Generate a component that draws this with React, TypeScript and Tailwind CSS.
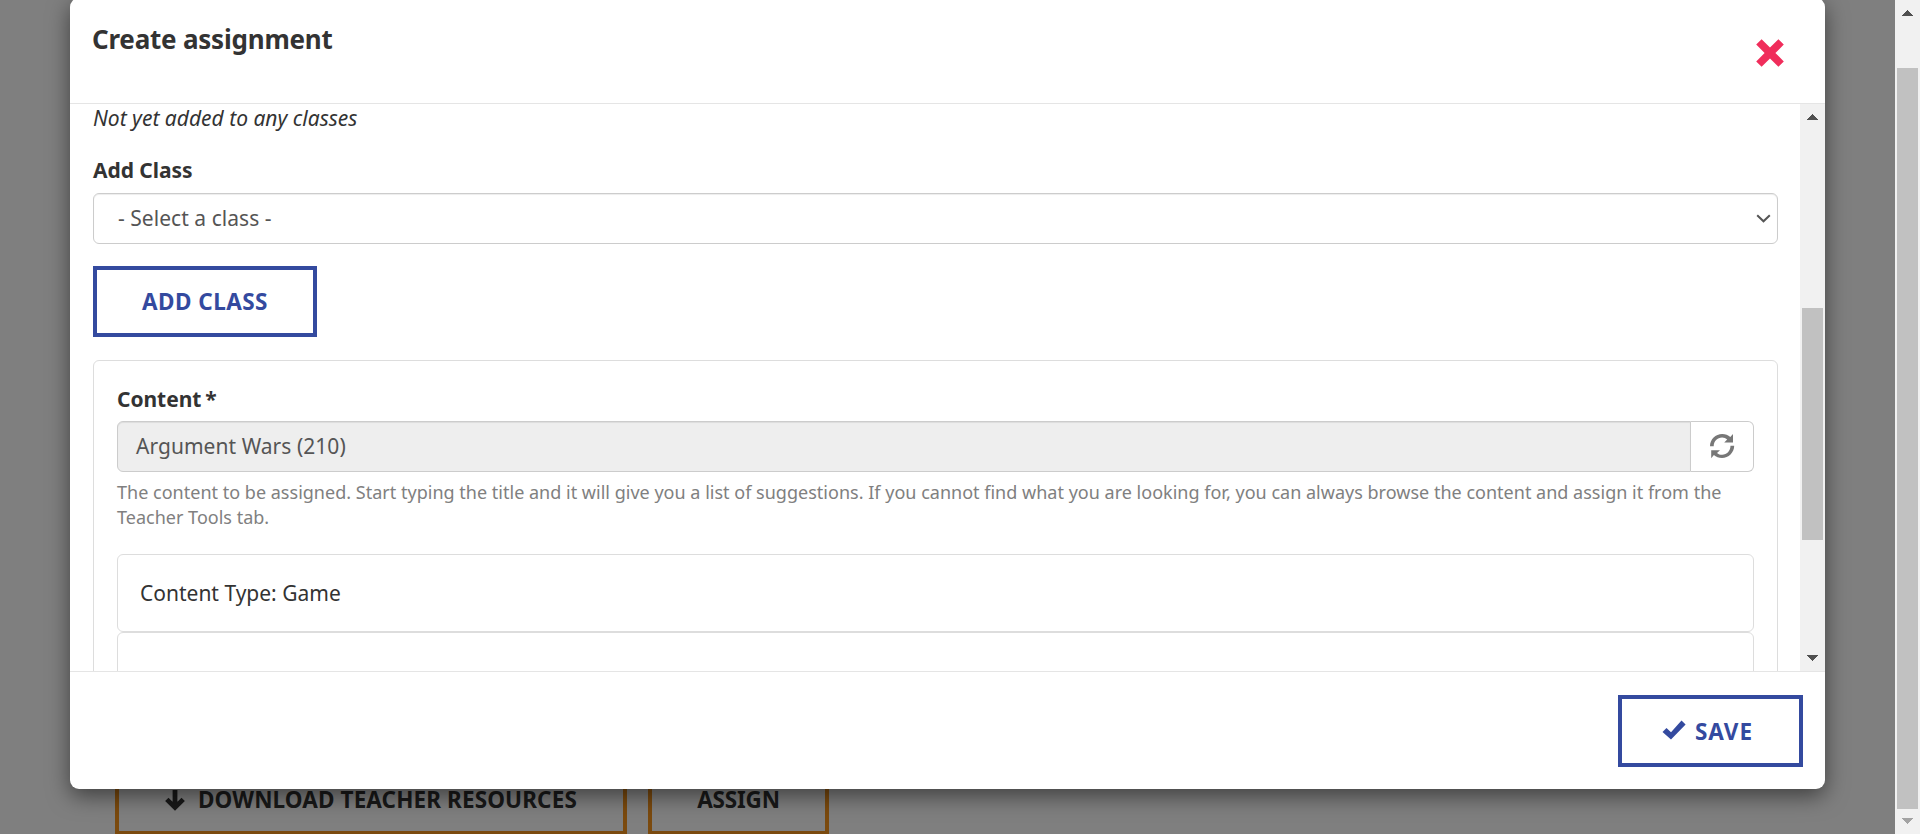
import type { ReactNode } from "react";

function ArrowUp({ className = "" }: { className?: string }) {
  return (
    <svg className={`block h-[6px] w-[11px] ${className}`} viewBox="0 0 11 6" shapeRendering="crispEdges">
      <path d="M0 6V5H1V4H2V3H3V2H4V1H5V0H6V1H7V2H8V3H9V4H10V5H11V6Z" fill="currentColor" />
    </svg>
  );
}

function RefreshIcon() {
  return (
    <svg className="block size-[26px]" viewBox="0 0 26 26">
      <path
        d="M1 13.2C1 6.4 6.6 1 13.2 1C16.4 1 19.2 2.1 21.3 4L24 1.1V9.4H15.2L18.2 6.5C16.8 5.2 15.1 4.5 13.1 4.5C8.4 4.5 4.7 8.4 4.7 13.2Z"
        fill="#777777"
      />
      <path
        d="M25.2 12.8C25.2 19.6 19.6 25 13 25C9.8 25 7 23.9 4.9 22L2.2 25.3V17.2H11L8 19.9C9.4 21.1 11.1 21.8 13.1 21.8C17.8 21.8 21.5 17.8 21.5 12.8Z"
        fill="#777777"
      />
    </svg>
  );
}

function FieldLabel({ children }: { children: ReactNode }) {
  return <label className="block text-[21px] leading-[30px] font-bold tracking-[-0.05px]">{children}</label>;
}

function PageBehind() {
  return (
    <div className="flex h-[834px] flex-col justify-end overflow-hidden bg-white pl-[115px]">
      <div className="-mb-[1px] flex h-[72px] gap-[21px] text-[22.5px] font-bold text-[#333333]">
        <div className="flex w-[512px] items-center border-4 border-[#f7941d] pt-[2px] pl-[46px]">
          <svg className="mr-[13px] block h-[21px] w-[20px]" viewBox="0 0 20 21">
            <path d="M10 0V17M1.8 9.4L10 17.4L18.2 9.4" fill="none" stroke="currentColor" strokeWidth="4.8" />
          </svg>
          <span className="tracking-[0.12px]">DOWNLOAD TEACHER RESOURCES</span>
        </div>
        <div className="flex w-[181px] items-center justify-center border-4 border-[#f7941d] pt-[2px] tracking-[-0.2px]">
          ASSIGN
        </div>
      </div>
    </div>
  );
}

export default function App() {
  return (
    <div className="flex h-[834px] w-[1920px] overflow-hidden font-['Noto_Sans',sans-serif] text-[21px] text-[#333333]">
      <div className="relative h-[834px] w-[1895px] overflow-hidden">
        <PageBehind />
        <div className="absolute inset-0 bg-black/50 pl-[70px]">
          <section className="-mt-[2px] flex h-[791px] w-[1755px] flex-col overflow-hidden rounded-[9px] bg-white shadow-[0_7px_22px_rgba(0,0,0,0.5)]">
            <header className="flex h-[106px] shrink-0 items-start justify-between border-b border-[#e5e5e5] pt-[23px] pr-[41px] pl-[22px]">
              <h1 className="text-[26px] leading-[36px] font-bold tracking-[-0.22px]">Create assignment</h1>
              <button aria-label="Close" className="mt-[18px]">
                <svg className="block size-[28px]" viewBox="0 0 28 28">
                  <path
                    d="M5.6 0.2L14 8.6L22.4 0.2L27.8 5.6L19.4 14L27.8 22.4L22.4 27.8L14 19.4L5.6 27.8L0.2 22.4L8.6 14L0.2 5.6Z"
                    fill="#f02d5b"
                  />
                </svg>
              </button>
            </header>

            <div className="flex h-[567px] shrink-0">
              <div className="h-[567px] w-[1730px] overflow-hidden px-[23px]">
                <p className="-mt-px leading-[30px] italic">Not yet added to any classes</p>
                <div className="mt-[22px]">
                  <FieldLabel>Add Class</FieldLabel>
                </div>
                <div className="mt-[8px] w-[1685px]">
                  <div className="flex h-[51px] w-full items-center justify-between rounded-[6px] border border-[#cccccc] pr-[6px] pl-[24px] text-[#555555] shadow-[inset_0_1px_1px_rgba(0,0,0,0.075)]">
                    <span className="tracking-[0.04px]">- Select a class -</span>
                    <svg className="block h-[9px] w-[15px]" viewBox="0 0 15 9">
                      <path d="M1.2 1.2L7.5 7.3L13.8 1.2" fill="none" stroke="currentColor" strokeWidth="2" />
                    </svg>
                  </div>
                  <button className="mt-[22px] flex h-[71px] w-[224px] items-center justify-center border-4 border-[#344a9f] pt-px text-[22.5px] font-bold tracking-[0.45px] text-[#344a9f]">
                    ADD CLASS
                  </button>

                  <fieldset className="mt-[23px] h-[400px] rounded-[6px] border border-[#dddddd] px-[23px] pt-[23px]">
                    <FieldLabel>
                      Content<span className="ml-[4px]">*</span>
                    </FieldLabel>
                    <div className="mt-[7px] flex h-[51px]">
                      <div className="flex w-[1574px] items-center rounded-l-[6px] border border-[#cccccc] bg-[#eeeeee] pt-px pl-[18px] tracking-[0.04px] text-[#555555] shadow-[inset_0_1px_1px_rgba(0,0,0,0.075)]">
                        Argument Wars (210)
                      </div>
                      <div className="flex w-[63px] items-center justify-center rounded-r-[6px] border border-l-0 border-[#cccccc] pr-px pb-px">
                        <RefreshIcon />
                      </div>
                    </div>
                    <p className="mt-[8px] text-[18px] leading-[25px] tracking-[0.012px] text-[#808080]">
                      The content to be assigned. Start typing the title and it will give you a list of suggestions. If
                      you cannot find what you are looking for, you can always browse the content and assign it from the
                      Teacher Tools tab.
                    </p>
                    <div className="mt-[24px] flex h-[78px] items-center rounded-[6px] border border-[#dddddd] pt-[2px] pl-[22px]">
                      Content Type: Game
                    </div>
                    <div className="h-[78px] rounded-[6px] border border-[#dddddd]" />
                  </fieldset>
                </div>
              </div>

              <div className="flex h-[567px] w-[25px] flex-col items-center bg-[#f1f1f1] text-[#505050]">
                <ArrowUp className="mt-[10px]" />
                <div className="mt-[188px] h-[232px] w-[21px] bg-[#c1c1c1]" />
                <ArrowUp className="mt-[115px] rotate-180" />
              </div>
            </div>

            <footer className="flex grow items-start justify-end border-t border-[#e5e5e5] pt-[23px] pr-[22px]">
              <button className="flex h-[72px] w-[185px] items-center border-4 border-[#344a9f] pt-px pl-[40px] text-[22.5px] font-bold text-[#344a9f]">
                <svg className="mr-[9px] block h-[20px] w-[24px] -translate-y-[2px]" viewBox="0 0 24 20">
                  <path d="M0.5 12L4.5 8L9 12.3L19.5 0.6L23.6 4.4L9 19.4Z" fill="currentColor" />
                </svg>
                <span className="tracking-[0.9px]">SAVE</span>
              </button>
            </footer>
          </section>
        </div>
      </div>

      <div className="flex h-[834px] w-[25px] flex-col items-center bg-[#f1f1f1] text-[#505050]">
        <ArrowUp className="mt-[10px]" />
        <div className="mt-[52px] h-[741px] w-[21px] bg-[#c1c1c1]" />
        <ArrowUp className="mt-[9px] rotate-180 text-[#a3a3a3]" />
      </div>
    </div>
  );
}
